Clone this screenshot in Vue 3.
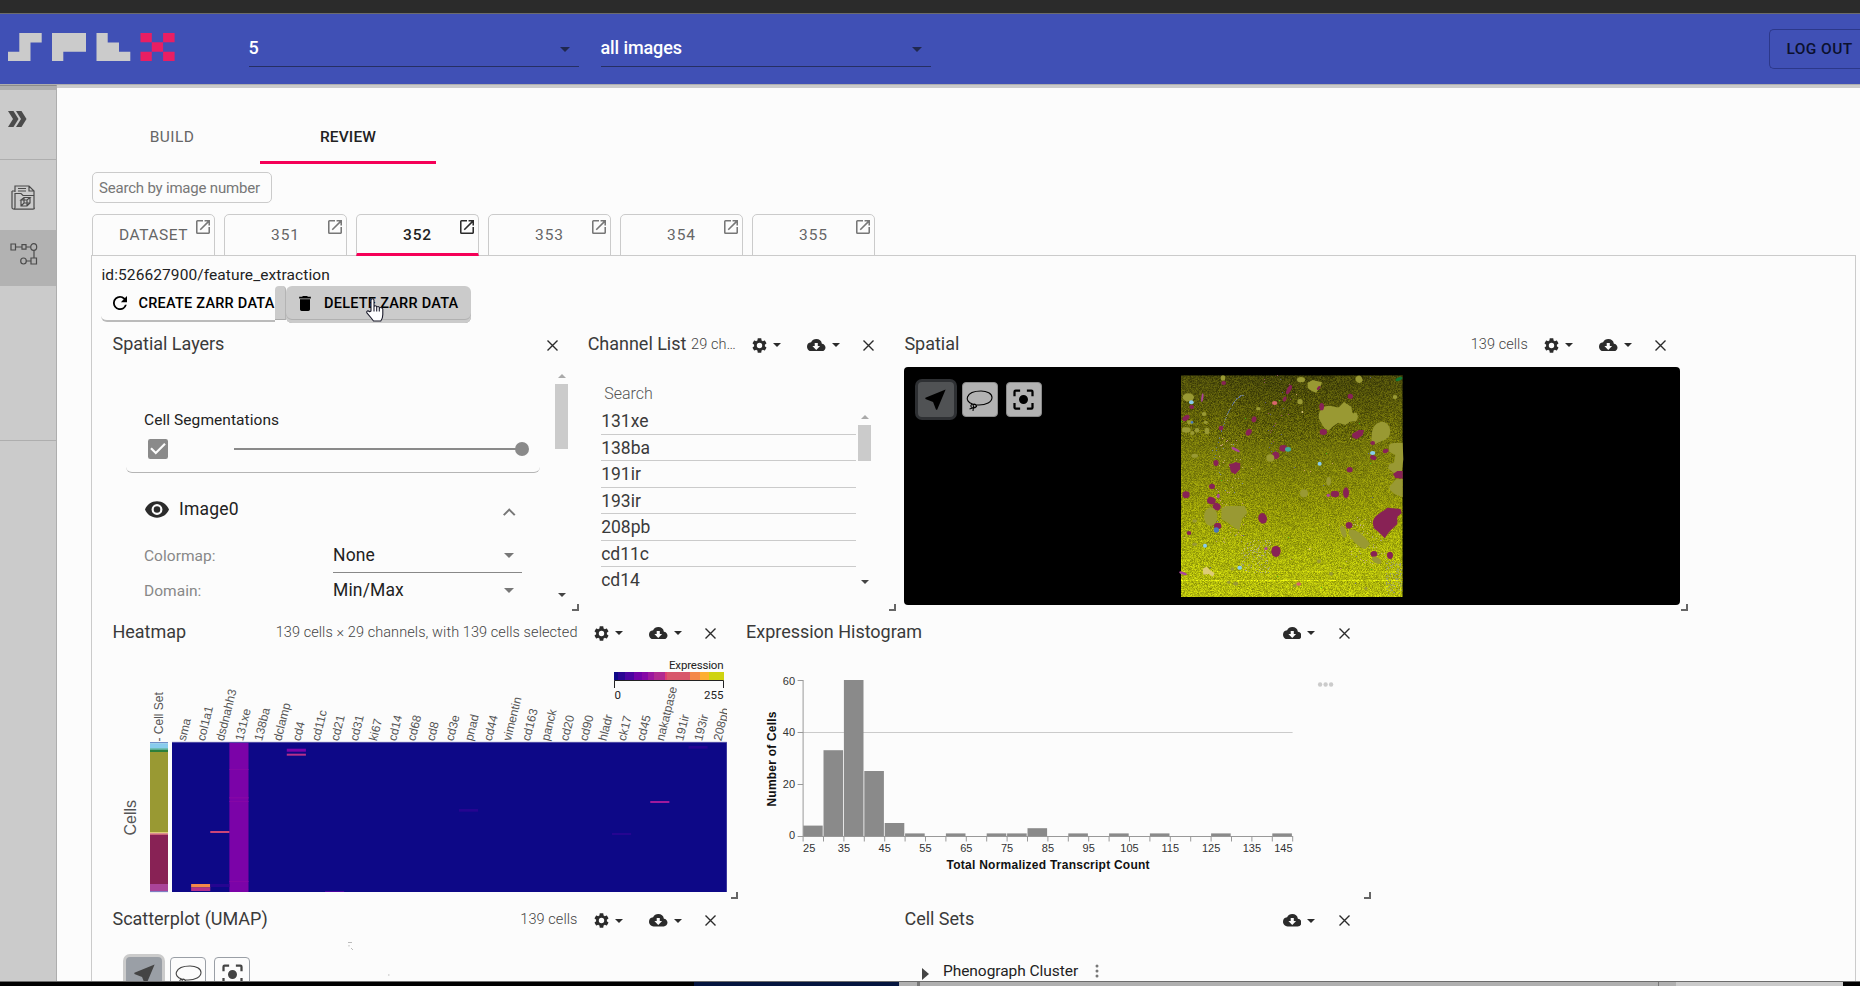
<script setup>
import { h, onMounted, ref } from 'vue'

const PATHS = {
  gear: 'M19.14 12.94c.04-.3.06-.61.06-.94 0-.32-.02-.64-.07-.94l2.03-1.58c.18-.14.23-.41.12-.61l-1.92-3.32c-.12-.22-.37-.29-.59-.22l-2.39.96c-.5-.38-1.03-.7-1.62-.94l-.36-2.54c-.04-.24-.24-.41-.48-.41h-3.84c-.24 0-.43.17-.47.41l-.36 2.54c-.59.24-1.13.57-1.62.94l-2.39-.96c-.22-.08-.47 0-.59.22L2.74 8.87c-.12.21-.08.47.12.61l2.03 1.58c-.05.3-.09.63-.09.94s.02.64.07.94l-2.03 1.58c-.18.14-.23.41-.12.61l1.92 3.32c.12.22.37.29.59.22l2.39-.96c.5.38 1.03.7 1.62.94l.36 2.54c.05.24.24.41.48.41h3.84c.24 0 .44-.17.47-.41l.36-2.54c.59-.24 1.13-.56 1.62-.94l2.39.96c.22.08.47 0 .59-.22l1.92-3.32c.12-.22.07-.47-.12-.61l-2.01-1.58zM12 15.6A3.6 3.6 0 1 1 12 8.400a3.6 3.6 0 0 1 0 7.200z',
  cloud: 'M19.35 10.04A7.49 7.49 0 0 0 12 4C9.110 4 6.600 5.640 5.350 8.040A5.994 5.994 0 0 0 0 14c0 3.310 2.690 6 6 6h13c2.760 0 5-2.240 5-5 0-2.640-2.050-4.780-4.650-4.960zM17 13l-5 5-5-5h3V9h4v4h3z',
  open: 'M19 19H5V5h7V3H5a2 2 0 0 0-2 2v14a2 2 0 0 0 2 2h14c1.100 0 2-.9 2-2v-7h-2v7zM14 3v2h3.590l-9.830 9.830 1.410 1.410L19 6.410V10h2V3h-7z',
  refresh: 'M17.650 6.350A7.958 7.958 0 0 0 12 4a8 8 0 1 0 7.730 10h-2.080A5.990 5.990 0 0 1 12 18a6 6 0 1 1 0-12c1.660 0 3.140.69 4.220 1.780L13 11h7V4l-2.350 2.350z',
  trash: 'M6 19c0 1.100.9 2 2 2h8c1.100 0 2-.9 2-2V7H6v12zM19 4h-3.500l-1-1h-5l-1 1H5v2h14V4z',
  eye: 'M12 4.500C7 4.500 2.730 7.610 1 12c1.730 4.390 6 7.500 11 7.500s9.270-3.110 11-7.500c-1.730-4.390-6-7.500-11-7.500zM12 17a5 5 0 1 1 0-10 5 5 0 0 1 0 10zm0-8a3 3 0 1 0 0 6 3 3 0 0 0 0-6z',
  check: 'M19 3H5a2 2 0 0 0-2 2v14a2 2 0 0 0 2 2h14a2 2 0 0 0 2-2V5a2 2 0 0 0-2-2zm-9 14l-5-5 1.410-1.410L10 14.170l7.590-7.590L19 8l-9 9z',
  less: 'M12 8l-6 6 1.410 1.410L12 10.830l4.590 4.580L18 14z',
  center: 'M5 15H3v4c0 1.100.9 2 2 2h4v-2H5v-4zM5 5h4V3H5a2 2 0 0 0-2 2v4h2V5zm14-2h-4v2h4v4h2V5a2 2 0 0 0-2-2zm0 16h-4v2h4a2 2 0 0 0 2-2v-4h-2v4zM12 8a4 4 0 1 0 0 8 4 4 0 0 0 0-8z',
  near: 'M21 3L3 10.530v.98l6.840 2.650L12.480 21h.98L21 3z',
}

const Icon = (p) => h('svg', { viewBox: p.box || '0 0 24 24', 'aria-hidden': 'true' }, [h('path', { d: PATHS[p.name] })])
Icon.props = ['name', 'box']

const CardHead = (p) => h('header', { class: 'head' }, [
  h('h2', p.title),
  h('span', { class: 'sub' }, p.sub || ''),
  p.gear ? h(Icon, { name: 'gear', box: '2 2 20 20', class: 'gear' }) : null,
  p.gear ? h('i', { class: 'tri' }) : null,
  p.cloud ? h(Icon, { name: 'cloud', box: '0 4 24 16', class: 'cloud' }) : null,
  p.cloud ? h('i', { class: 'tri t2' }) : null,
  h('svg', { class: 'close', viewBox: '0 0 11 11' }, [h('path', { d: 'M.5.5l10 10M10.500.5l-10 10' })]),
])
CardHead.props = ['title', 'sub', 'gear', 'cloud']

const Tools = (p) => h('div', { class: ['tools', p.light ? 'light' : ''] }, [
  h('span', { class: 'tool on' }, [h(Icon, { name: 'near' })]),
  h('span', { class: 'tool' }, [
    h('svg', { class: 'lasso', viewBox: '0 0 27 22' }, [
      h('path', { d: 'M6.500 14C2 12.500.5 9.500 1.500 7C3 3 9 1 15 1C21 1 26 3.500 26 7.500C26 12 20 15 13 15C11 15 9 14.800 7 14.200C4.500 14 4 17 6.500 17.800C9.500 18.500 11.500 16.500 9.500 14.500C8 13.500 6.500 14.500 7.500 16.500L7 21M3.500 19L11 16.500' }),
    ]),
  ]),
  h('span', { class: 'tool' }, [h(Icon, { name: 'center' })]),
])
Tools.props = ['light']

const imageTabs = ['DATASET', '351', '352', '353', '354', '355']
const channels = ['131xe', '138ba', '191ir', '193ir', '208pb', 'cd11c', 'cd14']
const heatCols = ['sma', 'col1a1', 'dsdnahh3', '131xe', '138ba', 'dclamp', 'cd4', 'cd11c', 'cd21', 'cd31', 'ki67', 'cd14', 'cd68', 'cd8', 'cd3e', 'pnad', 'cd44', 'vimentin', 'cd163', 'panck', 'cd20', 'cd90', 'hladr', 'ck17', 'cd45', 'nakatpase', '191ir', '193ir', '208pb']
const pitch = 19.13
const heatCells = [
  [3, 742.700, 149.300, '#7b03a8'], [3, 769, 1, '#8506a6'], [3, 797, 1.500, '#8506a6'], [3, 801, 1, '#8506a6'], [3, 881, 1, '#8506a6'],
  [6, 748.700, 3, '#7b03a8'], [6, 753.700, 2, '#b5308b'], [2, 831, 2, '#cc4578'],
  [1, 884, 3.500, '#f48849'], [1, 887.500, 3.500, '#b5308b'], [2, 884, 3, '#250591'],
  [15, 809, 2.700, '#250591'], [25, 801, 2, '#a01a9c'], [23, 833, 2, '#250591'], [27, 746, 2.700, '#250591'], [8, 891, 1, '#4a03a0'],
]
const setSegments = [
  [742, 1.300, '#6f8fc8'], [743.300, 5, '#88ccee'], [748.300, 1.500, '#44aa99'], [749.800, 2.200, '#2b7f3c'],
  [752, 80, '#999933'], [832, 1.300, '#ddcc77'], [833.300, 1.700, '#cc6677'], [835, 49, '#882255'], [884, 7.500, '#aa4499'], [891.300, .8, '#5c6fc0'],
]
const legend = [[0, 4, '#0d0887'], [4, 7, '#2a0593'], [11, 9, '#4b03a1'], [20, 8, '#7201a8'], [28, 6, '#8606a6'], [34, 6, '#9c179e'], [40, 11, '#b12a90'], [51, 2, '#e03d70'], [53, 23, '#d8576b'], [76, 10, '#f48849'], [86, 9, '#fdae32'], [95, 15, '#cfd310']]
const bins = [4, 33, 60, 25, 5, 1, 0, 1, 0, 1, 1, 3, 0, 1, 0, 1, 0, 1, 0, 0, 1, 0, 0, 1]
const binW = 20.4
const ticks = [25, 35, 45, 55, 65, 75, 85, 95, 105, 115, 125, 135, 145]
const tickX = (i) => (i === 0 ? 803.500 : i === 12 ? 1293 : 803.500 + i * 40.8)
const anchor = (i) => (i === 0 ? 'start' : i === 12 ? 'end' : 'middle')

// Ellipse cells on the tissue: cx, cy, rx, ry, rotation, colour key
const C = { o: '#999933', m: '#882255', c: '#88ccee', b: '#4a78b8', p: '#aa4499', r: '#d8656c', y: '#ddcc77', t: '#44aa99', g: '#117733' }
const spots = [
  [85, 112, 17, 12, 0, 'o'], [94, 127, 7, 6, 0, 'c'], [95, 141, 7, 6, 0, 'm'], [127, 113, 3, 13, 8, 'p'], [191, 69, 7, 6, 0, 'm'], [189, 54, 7, 8, 0, 'o'],
  [78, 174, 12, 7, -35, 'm'], [132, 162, 7, 6, 0, 'o'], [79, 210, 13, 8, 0, 'o'], [90, 187, 9, 6, 0, 'o'], [96, 187, 4, 4, 0, 'b'], [111, 211, 7, 7, 0, 'o'], [137, 187, 6, 5, 0, 'o'], [141, 213, 7, 10, 0, 'o'],
  [97, 219, 6, 6, 0, 'o'], [183, 204, 7, 7, 0, 'm'], [266, 217, 8, 11, 35, 'm'], [282, 178, 7, 9, 20, 'm'], [295, 146, 7, 5, 0, 'o'], [344, 129, 8, 6, 0, 'r'],
  [387, 89, 6, 15, 28, 'm'], [374, 117, 5, 8, 25, 'm'], [423, 59, 12, 8, 0, 'o'], [420, 125, 8, 8, 0, 'o'], [427, 156, 3, 3, 0, 'y'], [476, 84, 4, 7, 40, 'm'], [597, 58, 10, 11, -30, 'o'],
  [571, 109, 8, 8, 0, 'm'], [485, 140, 7, 11, 0, 'm'], [490, 216, 11, 9, 0, 'm'], [717, 57, 11, 5, -25, 'g'], [705, 111, 7, 6, 0, 'o'],
  [638, 249, 7, 6, 0, 'm'], [638, 279, 8, 6, 0, 'c'], [640, 293, 10, 7, 20, 'm'], [677, 273, 9, 6, -20, 'm'], [479, 311, 6, 6, 0, 'c'], [569, 329, 9, 8, 0, 'm'],
  [370, 265, 12, 10, 0, 'm'], [384, 268, 9, 7, 0, 't'], [347, 286, 11, 11, 0, 'm'], [331, 294, 12, 11, 0, 'o'], [227, 269, 14, 4, 28, 'p'], [168, 309, 8, 9, 0, 'm'], [104, 287, 10, 6, 0, 'o'],
  [156, 379, 9, 8, 0, 'm'], [78, 404, 11, 10, 0, 'm'], [154, 422, 13, 11, 20, 'm'], [170, 440, 12, 11, 30, 'm'], [175, 408, 4, 7, 0, 'p'], [506, 364, 7, 13, 0, 'o'], [432, 400, 12, 12, 0, 'o'],
  [525, 402, 13, 10, 0, 'm'], [505, 406, 5, 5, 0, 'p'], [558, 398, 9, 16, 0, 'm'], [152, 470, 20, 28, 0, 'o'], [173, 498, 11, 10, 0, 'm'], [169, 510, 8, 8, 0, 'b'], [87, 519, 7, 6, 0, 'm'],
  [104, 483, 7, 5, 0, 'o'], [308, 475, 13, 16, -15, 'm'], [567, 496, 10, 10, 0, 'm'], [550, 515, 8, 19, -18, 'o'], [642, 582, 10, 9, 0, 'm'], [690, 586, 9, 11, 0, 'm'], [650, 601, 16, 9, 30, 'o'],
  [135, 557, 6, 6, 0, 'c'], [104, 553, 8, 5, 0, 'o'], [348, 574, 14, 17, 0, 'm'], [318, 566, 5, 4, 0, 'p'], [239, 623, 7, 6, 0, 'c'], [69, 640, 12, 4, 20, 'p'], [217, 627, 6, 5, 0, 'o'],
  [416, 672, 7, 5, 0, 'r'], [404, 677, 5, 5, 0, 'o'], [477, 604, 6, 6, 0, 'o'], [227, 671, 8, 6, 0, 'o'], [206, 667, 5, 5, 0, 'o'], [513, 641, 6, 6, 0, 'o'], [618, 685, 5, 5, 0, 'o'], [449, 567, 3, 3, 0, 'y'],
]
const blobs = [
  ['M443 68L458 60L486 67L480 84L468 98L455 93L443 84Z', 'o'],
  ['M476 175C474 150 490 137 508 137C525 139 535 145 538 140L552 126L574 140L577 158L594 168L588 183L570 185L556 195L535 188L520 198L505 212L492 203Z', 'o'],
  ['M635 228C635 200 650 185 668 185C690 190 694 210 688 228C680 240 660 245 645 252L634 240Z', 'o'],
  ['M686 258C692 245 710 250 728 248L730 298L725 340L700 338L684 325L688 312L702 308L706 285L688 275Z', 'o'],
  ['M688 380L708 358L728 357L728 412L704 402L690 390Z', 'o'],
  ['M576 222L596 210L612 210L608 226L590 238L577 232Z', 'm'],
  ['M207 312L220 310L226 306L241 310L240 328L226 343L213 336Z', 'm'],
  ['M699 342L712 333L728 333L728 356L706 354Z', 'm'],
  ['M184 445L200 438L254 438L262 458L246 476L238 512L222 502L200 486L184 478Z', 'o'],
  ['M566 510C590 505 612 525 630 552L616 568C596 562 578 545 566 522Z', 'o'],
  ['M638 488C642 462 670 456 682 443L722 447L725 460L712 470L712 492L688 515L674 535L658 518L642 505Z', 'm'],
  ['M128 626L140 620L150 630L164 640L158 650L146 642L130 644Z', 'y'],
  ['M582 158L590 158L594 170L588 184L574 182Z', 'o'],
]

const tissue = ref(null)
onMounted(() => {
  const ctx = tissue.value.getContext('2d')
  let seed = 7331
  const rnd = () => ((seed = (seed * 16807) % 2147483647) / 2147483647)
  const stops = [[0, 72, 72, 10], [.18, 92, 92, 8], [.38, 122, 124, 10], [.6, 146, 150, 8], [.8, 168, 176, 10], [1, 182, 190, 12]]
  const img = ctx.createImageData(222, 222)
  for (let y = 0; y < 222; y++) {
    const t = y / 221
    const k = Math.max(1, stops.findIndex((s) => s[0] >= t))
    const a = stops[k - 1], b = stops[k]
    const f = (t - a[0]) / (b[0] - a[0])
    for (let x = 0; x < 222; x++) {
      const side = 1 + .06 * Math.cos((x / 222) * 6.28) * (1 - t)
      const n = (rnd() + rnd() - 1) * (t < .3 ? .4 : .28) + side
      const line = y === 205 ? 1.2 : y === 196 ? 1.1 : 1
      const i = (y * 222 + x) * 4
      const edge = y === 0 || x === 221 ? .55 : 1
      for (let c = 0; c < 3; c++) img.data[i + c] = (a[c + 1] + (b[c + 1] - a[c + 1]) * f) * n * line * edge
      img.data[i + 3] = 255
    }
  }
  ctx.putImageData(img, 0, 0)
  const speck = (n, x0, x1, y0, y1, cols) => {
    for (let i = 0; i < n; i++) {
      ctx.fillStyle = cols[Math.floor(rnd() * cols.length)]
      ctx.fillRect(Math.floor(x0 + rnd() * (x1 - x0)), Math.floor(y0 + rnd() * (y1 - y0)), 1, 1)
    }
  }
  for (let i = 0; i < 85; i++) {
    const t = rnd()
    ctx.fillStyle = ['#5a6f90', '#54658f', '#8b8f60'][i % 3]
    ctx.fillRect(Math.floor(60 - t * 27 + (1 - t) * (1 - t) * 3), Math.floor(20 + t * t * 60 + t * 5), 1, 1)
  }
  speck(150, 60, 90, 165, 198, ['#9a9a60', '#a0a080', '#c4c470'])
  speck(110, 205, 221, 185, 220, ['#a0a070', '#98a060'])
  speck(60, 165, 205, 140, 190, ['#b0ac70', '#c8b080'])
  speck(60, 30, 65, 60, 170, ['#b8a870', '#c89880', '#7888a0'])
  speck(35, 0, 220, 0, 220, ['#40c010', '#d0a070', '#606890'])
  speck(25, 80, 110, 0, 80, ['#905060', '#585880'])
})
</script>

<template>
  <div class="screen">
    <div class="chrome"></div>
    <header class="topbar">
      <svg class="logo" viewBox="0 0 168 28">
        <path d="M11.300 0H33.700V9.500H22.500V28H0V18.700H11.300zM44 0H78V18.800H55.300V28H44zM88.500 0H99.700V9.500H111V18.700H122.300V28H88.500z" fill="#cbcbcb" />
        <path d="M132.500 0h11.300v9.300h11.300V0h11.500v9.300h-11.500v9.400h11.500V28h-11.500v-9.300h-11.300V28h-11.300v-9.300h11.300V9.300h-11.300z" fill="#e91e63" />
      </svg>
      <div class="select"><span>5</span><i></i></div>
      <div class="select second"><span>all images</span><i></i></div>
      <button class="logout">LOG OUT</button>
    </header>
    <div class="body">
      <aside>
        <div class="slot s1">
          <svg width="19" height="16" viewBox="0 0 19 16"><path d="M0 0h5.500l5 8-5 8H0l5-8zM8 0h5.500l5 8-5 8H8l5-8z" fill="#4b4b4b" /></svg>
        </div>
        <div class="slot s2">
          <svg width="25" height="25" viewBox="0 0 25 25" fill="none" stroke="#4b4b4b" stroke-width="1.200">
            <path d="M4 7V1h14l5 5v17.500M18 1v5h5M7 3.500h8M7 6h8M1 6v16.500a1.500 1.500 0 0 0 3 0V8.500h6l2 2h11M2.500 24.200H22q1.500 0 1.500-1.500M1 6h3" />
            <path d="M10 15l3-2.500h6l-3 2.500zM10 15v6h6l3-3v-5.500M16 15v6M10 21l3-3h6M13 12.500V18" />
          </svg>
        </div>
        <div class="slot s3">
          <svg width="28" height="22" viewBox="0 0 28 22" fill="none" stroke="#4b4b4b" stroke-width="1.200">
            <path d="M1 1h4.500v6H1zM12 1.700h4v4.500h-4zM21 15h5.500v6H21zM5.500 4H12M16 4h4.500M24 7.300V15M16 18h5" />
            <ellipse cx="23.700" cy="4" rx="3" ry="3.300" /><ellipse cx="13.500" cy="18" rx="2.800" ry="3" />
          </svg>
        </div>
        <div class="slot s4"></div>
      </aside>
      <main>
        <nav class="modes"><span>BUILD</span><span class="on">REVIEW</span></nav>
        <div class="finder">Search by image number</div>
        <nav class="imgs">
          <div v-for="t in imageTabs" :key="t" :class="['tab', { on: t === '352', word: t === 'DATASET' }]">
            <span>{{ t }}</span><Icon name="open" box="3 3 18 18" />
          </div>
        </nav>
        <section class="panel">
          <p class="ident">id:526627900/feature_extraction</p>
          <div class="actions">
            <button class="create"><Icon name="refresh" box="4 4 16 16" /><span>CREATE ZARR DATA</span></button>
            <i class="gap"></i>
            <button class="delete"><Icon name="trash" box="5 3 14 18" /><span>DELETE ZARR DATA</span>
              <svg class="hand" viewBox="0 0 18 24"><path d="M5 13V2.500q0-1.700 1.500-1.700T8 2.500V9q0-1.300 1.300-1.300T10.700 9v.7q0-1.200 1.300-1.200t1.300 1.200v1q0-1.200 1.300-1.200T16.800 11v5.500q0 4-2 6.500H7.500L5.200 20 .9 14.800q-.6-1.400.6-1.900 1.200-.2 2.200.9zM8 9v4.500M10.700 10v3.500M13.300 11v2.500" fill="#fff" stroke="#1b1b2b" stroke-width="1.100" stroke-linejoin="round" /></svg>
            </button>
          </div>
          <div class="board">
            <article class="card layers">
              <CardHead title="Spatial Layers" />
              <div class="cols">
                <div class="lcontent">
                  <div class="seg">
                    <p>Cell Segmentations</p>
                    <div class="slide"><Icon name="check" box="3 3 18 18" /><div class="track"><i></i></div></div>
                  </div>
                  <div class="imgrow"><Icon name="eye" box="1 4.500 22 15" class="eye" /><span>Image0</span><Icon name="less" box="6 8 12 7.410" class="less" /></div>
                  <div class="opt"><label>Colormap:</label><div>None<i></i></div></div>
                  <div class="opt o2"><label>Domain:</label><div>Min/Max<i></i></div></div>
                </div>
                <div class="bar"><i class="up"></i><b></b><i class="down"></i></div>
              </div>
              <i class="grip"></i>
            </article>
            <article class="card channels">
              <CardHead title="Channel List" sub="29 ch…" gear="1" cloud="1" />
              <p class="find">Search</p>
              <div class="cols">
                <ul><li v-for="c in channels" :key="c">{{ c }}</li></ul>
                <div class="bar"><i class="up"></i><b></b><i class="down"></i></div>
              </div>
              <i class="grip"></i>
            </article>
            <article class="card spatial">
              <CardHead title="Spatial" sub="139 cells" gear="1" cloud="1" />
              <div class="viewer">
                <Tools />
                <div class="tissue">
                  <canvas ref="tissue" width="222" height="222"></canvas>
                  <svg viewBox="63 45 666 666">
                    <path v-for="(b, i) in blobs" :key="'b' + i" :d="b[0]" :fill="C[b[1]]" />
                    <ellipse v-for="(s, i) in spots" :key="i" :cx="s[0]" :cy="s[1]" :rx="s[2]" :ry="s[3]" :fill="C[s[5]]" :transform="`rotate(${s[4]} ${s[0]} ${s[1]})`" />
                  </svg>
                </div>
              </div>
              <i class="grip"></i>
            </article>
            <article class="card heatmap">
              <CardHead title="Heatmap" sub="139 cells × 29 channels, with 139 cells selected" gear="1" cloud="1" />
              <svg class="plot" viewBox="104 655 633.500 244" width="633.500" height="244">
                <g class="leg">
                  <text x="723.500" y="669" text-anchor="end" textLength="54.500">Expression</text>
                  <rect v-for="l in legend" :key="l[0]" :x="614 + l[0]" y="672" :width="l[1]" height="8.500" :fill="l[2]" />
                  <path d="M614.500 688v-7.500h109V688" fill="none" stroke="#222" />
                  <text x="614.500" y="699">0</text><text x="723.500" y="699" text-anchor="end">255</text>
                </g>
                <clipPath id="labels"><rect x="104" y="680" width="623" height="63" /></clipPath>
                <g class="cname" clip-path="url(#labels)">
                  <text v-for="(c, i) in heatCols" :key="i" :transform="`translate(${185.500 + i * pitch} 741.500) rotate(-76)`">{{ c }}</text>
                </g>
                <text class="cname" transform="translate(162.500 741.500) rotate(-90)">- Cell Set</text>
                <text class="cells" transform="translate(136 835.500) rotate(-90)">Cells</text>
                <rect v-for="s in setSegments" :key="s[0]" x="150" :y="s[0]" width="18" :height="s[1]" :fill="s[2]" />
                <rect x="172" y="742" width="554.800" height="150" fill="#0d0887" />
                <rect v-for="(c, i) in heatCells" :key="'h' + i" :x="172 + c[0] * pitch" :y="c[1]" :width="pitch" :height="c[2]" :fill="c[3]" />
                <path d="M172 742.300h554.800" stroke="#7470b8" stroke-width=".8" />
              </svg>
              <i class="grip"></i>
            </article>
            <article class="card hist">
              <CardHead title="Expression Histogram" cloud="1" />
              <svg class="plot" viewBox="738.400 655 633.500 244" width="633.500" height="244">
                <path d="M803 732.500h490" stroke="#cbcbcb" />
                <rect v-for="(b, i) in bins" :key="i" :x="803.500 + i * binW" :y="836 - b * 2.600" :width="binW - .8" :height="b * 2.600" fill="#8a8a8a" />
                <path d="M803.500 680v156.500H1293M798 680.500h5.500M798 732.500h5.500M798 784.500h5.500M798 836.500h5.500" fill="none" stroke="#999" />
                <path v-for="i in 25" :key="'t' + i" :d="`M${803.500 + (i - 1) * binW} 836v5.500`" stroke="#999" />
                <g class="ax">
                  <text v-for="(t, i) in ticks" :key="t" :x="tickX(i)" y="852" :text-anchor="anchor(i)">{{ t }}</text>
                  <text v-for="n in [0, 20, 40, 60]" :key="'y' + n" x="795.500" :y="839.300 - n * 2.580" text-anchor="end">{{ n }}</text>
                </g>
                <g class="at">
                  <text x="1048.500" y="868.500" text-anchor="middle" textLength="203">Total Normalized Transcript Count</text>
                  <text transform="translate(776 759) rotate(-90)" text-anchor="middle" textLength="95">Number of Cells</text>
                </g>
                <g fill="#cbcbcb"><circle cx="1320.500" cy="684.500" r="2.200" /><circle cx="1326" cy="684.500" r="2.200" /><circle cx="1331.500" cy="684.500" r="2.200" /></g>
              </svg>
              <i class="grip"></i>
            </article>
            <article class="card scatter">
              <CardHead title="Scatterplot (UMAP)" sub="139 cells" gear="1" cloud="1" />
              <div class="cloudplot">
                <Tools light="1" />
                <svg class="marks" viewBox="0 0 60 38"><path d="M0 .5h4M1 3v1.500M3 6l2 2M40 33h1.500" stroke="#bbb" fill="none" /></svg>
              </div>
            </article>
            <article class="card sets">
              <CardHead title="Cell Sets" cloud="1" />
              <div class="node"><i></i><span>Phenograph Cluster</span><svg viewBox="0 0 4 14"><circle cx="2" cy="2" r="1.500" /><circle cx="2" cy="7" r="1.500" /><circle cx="2" cy="12" r="1.500" /></svg></div>
            </article>
          </div>
        </section>
      </main>
    </div>
    <footer><i class="f1"></i><i class="f2"></i><i class="f3"></i><i class="f4"></i><i class="f5"></i><i class="f6"></i><i class="f7"></i></footer>
  </div>
</template>

<style>
body { background: #fcfcfc; overflow: hidden; }
.head { height: 44px; display: flex; align-items: center; padding: 0 21.5px 0 8.500px; box-sizing: border-box; flex: none; color: #2b2b2b; }
.head h2 { margin: 0; font-size: 18px; font-weight: 400; color: #3a3a3a; white-space: nowrap; padding-bottom: 4px; letter-spacing: -.02px; }
.head .sub { flex: 1; text-align: right; font-size: 14.500px; font-weight: 300; color: #444; white-space: nowrap; letter-spacing: .08px; padding-bottom: 2px; }
.head .gear { width: 15px; height: 15px; margin-left: 16.500px; fill: #2b2b2b; }
.head .tri { width: 0; height: 0; border: 4px solid transparent; border-top-color: #2b2b2b; border-bottom: 0; margin: 0 26px 0 6px; }
.head .cloud { width: 18.500px; height: 12.500px; fill: #2b2b2b; }
.head .tri.t2 { margin: 0 23.500px 0 6px; }
.head .close { width: 11px; height: 11px; stroke: #2b2b2b; stroke-width: 1.400; fill: none; }
.scatter .head, .sets .head { height: 43px; margin-bottom: 1px; }
.tools { display: flex; align-items: flex-start; gap: 8px; }
.tool { width: 36px; height: 35px; box-sizing: border-box; border: 1px solid #8a8a8a; background: #b2b2b2; border-radius: 4px; display: flex; align-items: center; justify-content: center; margin-top: 3px; }
.tool svg { width: 27px; height: 27px; fill: #000; }
.tool svg.lasso { width: 27px; height: 22px; fill: none; stroke: #000; stroke-width: 1.100; margin-top: 3px; }
.tool.on { width: 42px; height: 41px; margin: 0 -3px 0 0; border: 3px solid #2e3033; background: #505254; border-radius: 7px; }
.tools.light .tool { background: #fcfcfc; border-color: #9a9fa6; }
.tools.light .tool svg { fill: #444; }
.tools.light .tool svg.lasso { fill: none; stroke: #444; }
.tools.light .tool.on { background: #9a9fa6; border-color: #cbcbcb; }
</style>

<style scoped>
.screen { width: 1860px; height: 986px; overflow: hidden; display: flex; flex-direction: column; background: #fcfcfc; font-family: Roboto, "Liberation Sans", sans-serif; color: #222; }
.chrome { height: 13px; background: #2b2b2b; border-bottom: 1px solid #6c6c6c; flex: none; }
.topbar { height: 70px; flex: none; background: #4050b5; display: flex; align-items: flex-start; border-bottom: 1px solid #aeaeae; }
.logo { width: 168px; height: 28px; margin: 19px 72.500px 0 8px; flex: none; }
.select { width: 330px; height: 53px; box-sizing: border-box; border-bottom: 1px solid #262f63; display: flex; justify-content: space-between; align-items: flex-start; color: #fff; font-size: 18px; font-weight: 500; letter-spacing: -.1px; flex: none; }
.select span { margin-top: 22px; line-height: 24px; }
.select i { border: 5px solid transparent; border-top-color: #20284f; border-bottom: 0; margin: 33px 9px 0 0; }
.second { margin-left: 22px; }
.logout { margin: 15px 0 0 auto; width: 91px; height: 40px; box-sizing: border-box; border: 1px solid #2c388a; border-right: 0; border-radius: 5px 0 0 5px; background: none; padding: 0 0 1px 16.500px; text-align: left; font: 500 15.500px Roboto, sans-serif; letter-spacing: .4px; color: #0b102e; white-space: nowrap; }
.body { flex: 1; min-height: 0; display: flex; }
aside { width: 57px; box-sizing: border-box; flex: none; background: #cbcbcb; border-right: 1px solid #aeaeae; border-top: 1px solid #8b8b8b; box-shadow: inset 0 4px #aeaeae; display: flex; flex-direction: column; }
.slot { display: flex; box-sizing: border-box; }
.s1 { height: 74px; border-bottom: 1px solid #aeaeae; padding: 25px 0 0 8px; }
.s2 { height: 70px; padding: 25px 0 0 11px; }
.s3 { height: 56px; background: #b2b2b2; padding: 13px 0 0 10px; }
.s4 { height: 155px; border-bottom: 1px solid #aeaeae; }
main { flex: 1; min-width: 0; box-shadow: inset 0 3px #cbcbcb; padding: 0 4px 0 34px; display: flex; flex-direction: column; }
.modes { display: flex; height: 79px; flex: none; margin-left: -7px; }
.modes span { width: 176px; box-sizing: border-box; text-align: center; padding-top: 42px; line-height: 20px; font-size: 15.500px; font-weight: 400; letter-spacing: .45px; color: #666; border-bottom: 3px solid transparent; }
.modes .on { color: #222; font-weight: 500; letter-spacing: .15px; border-color: #f50057; }
.finder { width: 180px; height: 31px; box-sizing: border-box; border: 1px solid #cbcbcb; border-radius: 5px; margin: 8px 0 0 1px; padding-left: 6px; line-height: 30px; font-size: 15px; letter-spacing: -.2px; color: #777; white-space: nowrap; flex: none; }
.imgs { display: flex; gap: 9px; margin: 11px 0 0 1px; height: 42px; flex: none; position: relative; z-index: 1; }
.tab { width: 123px; height: 42px; box-sizing: border-box; border: 1px solid #cbcbcb; border-radius: 5px 5px 0 0; display: flex; justify-content: flex-end; padding-right: 4px; color: #666; }
.tab span { flex: 1; text-align: center; font-size: 15.500px; font-weight: 400; letter-spacing: .9px; line-height: 40px; margin-right: -18px; }
.tab.word span { letter-spacing: .55px; }
.tab svg { width: 14px; height: 14px; fill: #777; margin-top: 5px; }
.tab.on { color: #222; border-bottom: 3px solid #f50057; }
.tab.on span { font-weight: 500; letter-spacing: .8px; }
.tab.on svg { fill: #2b2b2b; }
.panel { flex: 1; min-height: 0; margin-top: -1px; border: 1px solid #cbcbcb; border-bottom: 0; display: flex; flex-direction: column; overflow: hidden; }
.ident { margin: 9px 0 0 9.500px; line-height: 20px; font-size: 15.500px; letter-spacing: .09px; height: 20px; }
.actions { display: flex; margin-left: 9px; height: 38px; flex: none; }
.actions button { border: 0; background: none; padding: 0; font: 500 14.500px Roboto, sans-serif; letter-spacing: .24px; color: #000; display: flex; align-items: center; white-space: nowrap; }
.actions .create { width: 174px; height: 36px; margin-top: 1px; border-bottom: 2px solid #bbb; border-radius: 0 0 0 6px; padding-left: 12px; box-sizing: border-box; }
.create svg { width: 14px; height: 14px; margin: 0 11.500px 1px 0; flex: none; }
.create span { padding-bottom: 0; }
.delete span { padding-bottom: 3px; }
.gap { width: 11px; height: 34px; margin-top: 1px; background: #cbcbcb; border-bottom: 1px solid #aaa; border-right: 1px solid #b4b4b4; border-radius: 4px 4px 0 0; box-sizing: border-box; }
.actions .delete { width: 185px; height: 37px; margin: 1px 0 0; background: #cbcbcb; border-radius: 6px; padding-left: 13px; position: relative; box-shadow: inset 0 -3px #cbcbcb, inset 0 -4px #b0b0b0; }
.delete svg { width: 12px; height: 15px; margin: 0 13px 3px 0; flex: none; }
.delete .hand { position: absolute; left: 80px; top: 12px; width: 18px; height: 24px; margin: 0; }
.board { display: grid; grid-template-columns: repeat(10, 158.400px); grid-template-rows: 288px 288px 200px; margin: 0 0 0 12px; }
.card { position: relative; min-width: 0; display: flex; flex-direction: column; overflow: hidden; }
.layers { grid-area: 1 / 1 / 2 / 4; }
.channels { grid-area: 1 / 4 / 2 / 6; }
.spatial { grid-area: 1 / 6 / 2 / 11; }
.heatmap { grid-area: 2 / 1 / 3 / 5; }
.hist { grid-area: 2 / 5 / 3 / 9; }
.scatter { grid-area: 3 / 1 / 4 / 5; }
.sets { grid-area: 3 / 6 / 4 / 9; }
.grip { position: absolute; right: 0; bottom: 0; width: 5px; height: 5px; border-right: 2px solid #666; border-bottom: 2px solid #666; }
.cols { display: flex; min-height: 0; }
.lcontent { width: 414px; margin: 0 15px 0 22px; }
.seg { height: 106px; box-sizing: border-box; border-bottom: 1.500px solid #b5b5b5; border-radius: 0 0 6px 6px; padding-left: 18px; }
.seg p { margin: 0; padding-top: 43px; line-height: 20px; font-size: 15.500px; letter-spacing: .07px; }
.slide { display: flex; align-items: center; height: 20px; padding-left: 4px; margin-top: 9px; }
.slide svg { width: 20px; height: 20px; fill: #8a8a8a; margin-right: 66px; }
.track { width: 288px; height: 2px; background: #8a8a8a; }
.track i { display: block; width: 14px; height: 14px; border-radius: 7px; background: #8a8a8a; margin: -6px 0 0 281px; }
.imgrow { height: 24px; margin: 24px 24.500px 0 19px; display: flex; align-items: center; font-size: 17.500px; letter-spacing: .2px; }
.imgrow span { flex: 1; margin-left: 10px; }
.eye { width: 24px; height: 17px; fill: #2b2b2b; }
.less { width: 12.500px; height: 8px; fill: #777; margin-top: 6px; }
.opt { display: flex; margin: 19px 0 0 18px; height: 33px; }
.opt label { width: 189px; font-size: 15.500px; color: #888; line-height: 32px; letter-spacing: .03px; }
.opt div { width: 189px; box-sizing: border-box; border-bottom: 1px solid #888; padding-bottom: 2px; font-size: 17.500px; letter-spacing: .15px; line-height: 30px; display: flex; justify-content: space-between; align-items: center; }
.opt i { border: 5.500px solid transparent; border-top-color: #777; border-bottom: 0; margin-right: 8px; }
.o2 { margin-top: 1.500px; }
.o2 div { border: 0; }
.bar { width: 13px; display: flex; flex-direction: column; align-items: center; }
.bar b { width: 13px; background: #cbcbcb; }
.bar i { border: 4px solid transparent; }
.bar .up { border-bottom-color: #aaa; border-top: 0; }
.bar .down { border-top-color: #444; border-bottom: 0; }
.layers .bar { height: 230px; padding-top: 7px; box-sizing: border-box; }
.layers .bar b { height: 65px; margin: 6px 0 auto; }
.find { margin: 17px 0 0 25px; height: 24px; line-height: 20px; font-size: 16px; font-weight: 300; color: #555; }
.channels ul { list-style: none; margin: 0 2px 0 22px; padding: 0; width: 255px; }
.channels li { height: 26.500px; box-sizing: border-box; border-bottom: 1px solid #cbcbcb; line-height: 27px; font-size: 17.500px; color: #3a3a3a; }
.channels li:last-child { border: 0; }
.channels .bar { padding-top: 7px; height: 176px; box-sizing: border-box; }
.channels .bar b { height: 36px; margin: 6px 0 auto; }
.viewer { width: 776px; height: 238px; margin-left: 8px; background: #000; border-radius: 4px; display: flex; box-sizing: border-box; padding-left: 11px; }
.viewer .tools { margin: 12px 139px 0 0; }
.tissue { display: grid; margin-top: 7.500px; width: 222px; height: 222px; }
.tissue > * { grid-area: 1 / 1; width: 222px; height: 222px; }
.tissue svg { overflow: visible; }
.plot { display: block; }
.leg { font-size: 11.500px; fill: #222; }
.cname { font: 12px "Liberation Sans", Arial, sans-serif; fill: #555; }
.cells { font: 16px "Liberation Sans", Arial, sans-serif; fill: #555; }
.ax { font: 11px "Liberation Sans", Arial, sans-serif; fill: #333; }
.at { font: bold 12px "Liberation Sans", Arial, sans-serif; fill: #111; }
.cloudplot { display: flex; padding: 11px 0 0 19px; }
.marks { width: 60px; height: 38px; margin: -12px 0 0 98px; }
.node { display: flex; align-items: center; margin: 16px 0 0 26px; height: 24px; font-size: 15.500px; letter-spacing: -.05px; }
.node i { border: 6px solid transparent; border-left: 7px solid #444; border-right: 0; margin: 5px 14px 0 0; }
.node svg { width: 4px; height: 14px; fill: #777; margin-left: 17px; }
footer { height: 4px; flex: none; border-top: 1px solid #6c6c6c; display: flex; background: #000; }
.f1 { width: 694px; background: #000; }
.f2 { width: 205px; background: #05153f; }
.f3 { width: 18px; background: #b0b0b0; }
.f4 { width: 3px; background: #777; }
.f5 { width: 738px; background: #b0b0b0; }
.f6 { width: 18px; background: #b0b0b0; box-shadow: inset 1px 0 #777; }
.f7 { width: 167px; background: #cbcbcb; }
</style>
